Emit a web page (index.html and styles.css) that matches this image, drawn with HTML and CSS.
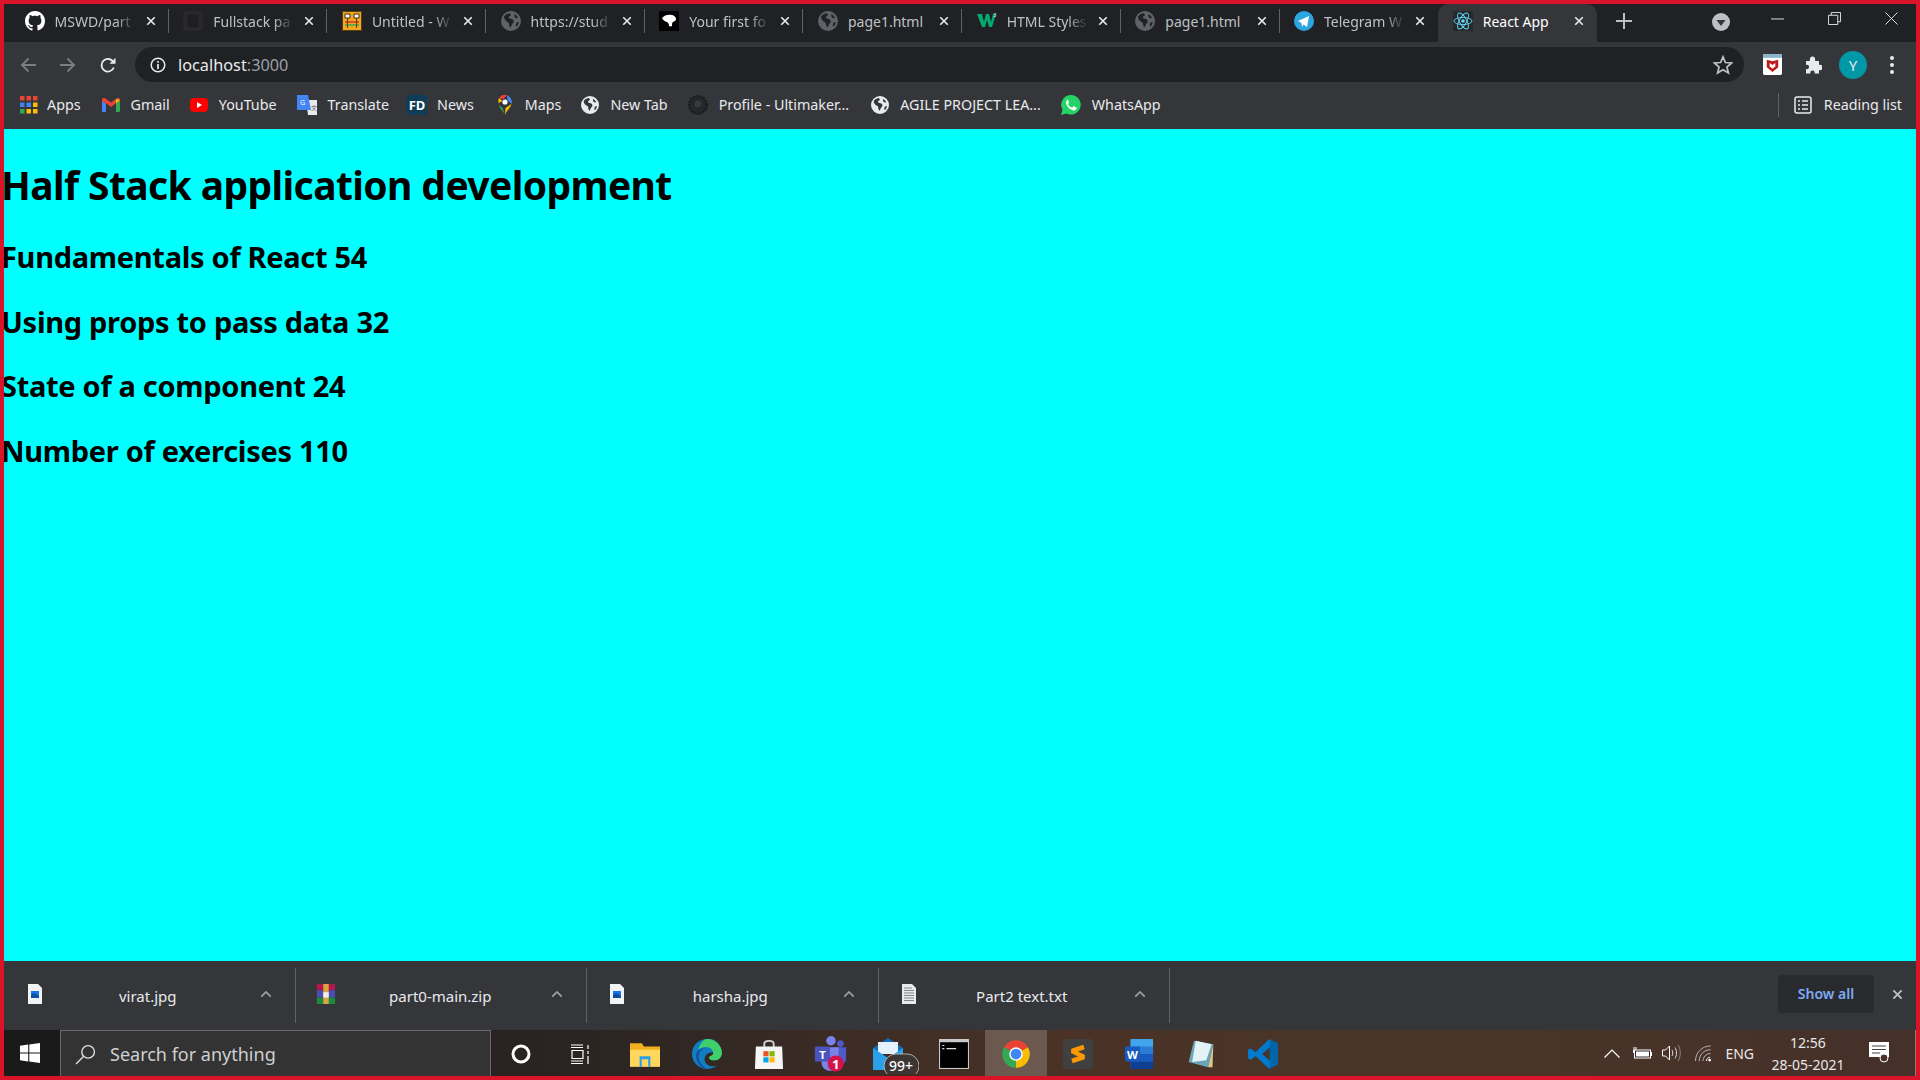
FILE: index.html
```html
<!DOCTYPE html>
<html lang="en">
<head>
    <meta charset="UTF-8">
    <meta name="viewport" content="width=device-width, initial-scale=1.0">
    <title>React App</title>
    <link rel="stylesheet" href="styles.css">
</head>
<body>

    <svg class="sprite">
        <symbol id="globe" viewBox="0 0 20 20">
            <path fill="currentColor" fill-rule="evenodd" d="M10 0a10 10 0 1 0 0 20a10 10 0 0 0 0-20zM3 5.500c1-1.500 3-3 5.500-3.300c1 .6 1.700 1.300 1.200 2.300c-.6.8-1.700.8-1.900 1.800c-.2 1 1.200 1.200 2 1.500c1.500.4 2.700.8 2.900 2.200c.2 1.500-1 2.300-1.700 3.300c-.5 1-.7 2-1.500 3.200c-1-1-1.400-2.500-1.500-3.800c-.1-1.300-1.300-1.500-2.300-2.300c-1-.8-2.500-1.800-2.700-4.900zM13 3c1.800.8 3.300 2.200 4 4c-1 .3-2.500.2-3.200-.7c-.6-.9-.3-2.200-.8-3.300zM17.600 11c0 2-1 3.600-2.300 4.800c-.6-1-.6-2.800.2-3.800c.5-.7 1.300-.9 2.100-1z"/>
        </symbol>
        <symbol id="close" viewBox="0 0 12 12">
            <path stroke="currentColor" stroke-width="2" fill="none" d="M1.500 1.500l9 9M10.500 1.500l-9 9"/>
        </symbol>
        <symbol id="chevron" viewBox="0 0 14 8">
            <path stroke="currentColor" stroke-width="2" fill="none" d="M1.500 7l5.500-5.500l5.500 5.500"/>
        </symbol>
        <symbol id="imagefile" viewBox="0 0 14 20">
            <path fill="#f1f3f4" d="M0 0h10l4 4v16h-14z"/>
            <path fill="#1a73e8" d="M3 7h8v7h-8z"/>
            <path fill="#0b4f9e" d="M3 11l3-2l5 3v2h-8z"/>
        </symbol>
    </svg>

    <div class="tabstrip">
        <div class="tab">
            <svg class="favicon" viewBox="0 0 16 16"><path fill="#fff" d="M8 0C3.580 0 0 3.580 0 8c0 3.540 2.290 6.530 5.470 7.590.4.070.55-.17.55-.38 0-.19-.01-.82-.01-1.490-2.010.37-2.530-.49-2.690-.94-.09-.23-.48-.94-.82-1.130-.28-.15-.68-.52-.01-.53.63-.01 1.080.58 1.230.82.72 1.210 1.870.87 2.330.66.070-.52.28-.87.51-1.070-1.780-.2-3.640-.89-3.640-3.950 0-.87.31-1.590.82-2.150-.08-.2-.36-1.020.08-2.120 0 0 .67-.21 2.200.82.64-.18 1.320-.27 2-.27.68 0 1.360.09 2 .27 1.530-1.040 2.200-.82 2.200-.82.44 1.100.16 1.920.08 2.120.51.56.82 1.270.82 2.150 0 3.070-1.870 3.750-3.650 3.950.29.25.54.73.54 1.480 0 1.070-.01 1.930-.01 2.200 0 .21.15.46.55.38A8.013 8.013 0 0 0 16 8c0-4.420-3.580-8-8-8z"/></svg>
            <span class="tab-title">MSWD/part</span>
            <svg class="tab-close"><use href="#close"/></svg>
        </div>
        <div class="tab">
            <svg class="favicon" viewBox="0 0 20 20"><rect x="1" y="1" width="18" height="18" rx="2" fill="#26272a" stroke="#2e2f32"/><rect x="4" y="3" width="12" height="14" fill="#1e1f21" stroke="#2c2d30"/></svg>
            <span class="tab-title">Fullstack pa</span>
            <svg class="tab-close"><use href="#close"/></svg>
        </div>
        <div class="tab">
            <svg class="favicon" viewBox="0 0 20 20"><rect x=".5" y=".5" width="19" height="19" fill="#f5a623" stroke="#5a3d10"/><path fill="#fff" stroke="#3a2a10" d="M3 3h5v4h-5zM12 3h5v4h-5z"/><path stroke="#d93025" stroke-width="1.500" d="M3 11h14"/><path stroke="#34a853" stroke-width="1.500" d="M3 14h14"/><path stroke="#5a3d10" d="M5.500 7v10M14.500 7v10"/></svg>
            <span class="tab-title">Untitled - W</span>
            <svg class="tab-close"><use href="#close"/></svg>
        </div>
        <div class="tab">
            <svg class="favicon globe-dim"><use href="#globe"/></svg>
            <span class="tab-title">https://stud</span>
            <svg class="tab-close"><use href="#close"/></svg>
        </div>
        <div class="tab">
            <svg class="favicon" viewBox="0 0 20 20"><rect width="20" height="20" fill="#000"/><path fill="#fff" d="M3 7c2-3 7-4 10-3c2 .5 4 2 4 4c0 2-2 2.500-3 3c-1 .5-1 2-1 4c-1 .5-2 .5-3 0c0-2-.5-3-2-4c-2-.5-4-1.500-5-4z"/></svg>
            <span class="tab-title">Your first fo</span>
            <svg class="tab-close"><use href="#close"/></svg>
        </div>
        <div class="tab">
            <svg class="favicon globe-dim"><use href="#globe"/></svg>
            <span class="tab-title nofade">page1.html</span>
            <svg class="tab-close"><use href="#close"/></svg>
        </div>
        <div class="tab">
            <svg class="favicon" viewBox="0 0 20 20"><path fill="#04aa6d" d="M0 3h5l2 8l2-8h3l2 8l2-8h3l-4 13h-3l-2-7l-2 7h-3z"/><text x="16" y="6" class="w3-sup">3</text></svg>
            <span class="tab-title">HTML Styles</span>
            <svg class="tab-close"><use href="#close"/></svg>
        </div>
        <div class="tab">
            <svg class="favicon globe-dim"><use href="#globe"/></svg>
            <span class="tab-title nofade">page1.html</span>
            <svg class="tab-close"><use href="#close"/></svg>
        </div>
        <div class="tab">
            <svg class="favicon" viewBox="0 0 20 20"><circle cx="10" cy="10" r="10" fill="#2ca5e0"/><path fill="#fff" d="M4 10l11-5l-2 11l-3.500-2.500l-1.500 2.500l-.5-4z"/></svg>
            <span class="tab-title">Telegram W</span>
            <svg class="tab-close"><use href="#close"/></svg>
        </div>
        <div class="tab tab-active">
            <svg class="favicon" viewBox="0 0 20 20"><rect width="20" height="20" fill="#26282c"/><g fill="none" stroke="#61dafb" stroke-width=".9"><ellipse cx="10" cy="10" rx="9" ry="3.600"/><ellipse cx="10" cy="10" rx="9" ry="3.600" transform="rotate(60 10 10)"/><ellipse cx="10" cy="10" rx="9" ry="3.600" transform="rotate(120 10 10)"/></g><circle cx="10" cy="10" r="1.800" fill="#61dafb"/></svg>
            <span class="tab-title nofade">React App</span>
            <svg class="tab-close"><use href="#close"/></svg>
        </div>
        <svg class="new-tab" viewBox="0 0 16 16"><path stroke="#bdc1c6" stroke-width="2" d="M8 0v16M0 8h16"/></svg>
        <div class="strip-end">
            <svg class="tab-search" viewBox="0 0 18 18"><circle cx="9" cy="9" r="9" fill="#bdc1c6"/><path fill="#35363a" d="M4.500 7h9l-4.500 6z"/></svg>
            <div class="window-controls">
                <svg viewBox="0 0 14 14"><path stroke="#e8eaed" d="M0 7.500h14"/></svg>
                <svg viewBox="0 0 14 14"><path fill="none" stroke="#e8eaed" d="M.5 3.500h10v10h-10zM3.500 3.500v-3h10v10h-3"/></svg>
                <svg viewBox="0 0 14 14"><path stroke="#e8eaed" d="M.5.500l13 13M13.500.500l-13 13"/></svg>
            </div>
        </div>
    </div>

    <div class="toolbar">
        <svg class="nav-icon dim" viewBox="0 0 16 16"><path fill="none" stroke="currentColor" stroke-width="1.800" d="M16 8h-14M8.500 1.500l-6.500 6.500l6.500 6.500"/></svg>
        <svg class="nav-icon dim" viewBox="0 0 16 16"><path fill="none" stroke="currentColor" stroke-width="1.800" d="M0 8h14M7.500 1.500l6.500 6.500l-6.500 6.500"/></svg>
        <svg class="nav-icon" viewBox="0 0 16 16"><path fill="none" stroke="currentColor" stroke-width="1.800" d="M13.800 10.500a6.300 6.300 0 1 1-.5-5.500"/><path fill="currentColor" d="M15.500 .8v6h-6z"/></svg>
        <div class="omnibox">
            <svg class="info-icon" viewBox="0 0 16 16"><circle cx="8" cy="8" r="6.800" fill="none" stroke="#e8eaed" stroke-width="1.500"/><path stroke="#e8eaed" stroke-width="1.700" d="M8 7v5M8 4v1.700"/></svg>
            <span class="url">localhost<span class="url-port">:3000</span></span>
            <svg class="star-icon" viewBox="0 0 20 20"><path fill="none" stroke="#bdc1c6" stroke-width="1.700" d="M10 1.800l2.400 5.700l6.200.5l-4.700 4l1.500 6l-5.400-3.200l-5.400 3.200l1.500-6l-4.700-4l6.200-.5z"/></svg>
        </div>
        <svg class="ext-mcafee" viewBox="0 0 20 22"><rect width="20" height="22" rx="1.500" fill="#fff"/><rect width="20" height="4" fill="#8ab4c8"/><path fill="#c01818" d="M4 6l6 1.500l6-1.500v8l-6 5l-6-5zM7 9.500v3.500l3 2.500l3-2.500v-3.500l-3 2z"/></svg>
        <svg class="ext-puzzle" viewBox="0 0 18 18"><path fill="#e8eaed" d="M2 5h4c-.5-2 0-4.500 2.500-4.500s3 2.500 2.500 4.500h4v4c2-.5 3.500 0 3.500 2.500s-1.500 3-3.500 2.500v3.500h-4.500c.5-2-.5-3-2-3s-2.500 1-2 3h-4.500v-4.500c2 .5 3-.5 3-2s-1-2.500-3-2z"/></svg>
        <div class="avatar">Y</div>
        <svg class="kebab" viewBox="0 0 4 18"><circle cx="2" cy="2" r="2"/><circle cx="2" cy="9" r="2"/><circle cx="2" cy="16" r="2"/></svg>
    </div>

    <div class="bookmarks">
        <div class="bookmark bookmark-apps">
            <svg class="mark-icon" viewBox="0 0 18 18"><g fill="#ea4335"><rect width="4.500" height="4.500"/><rect x="6.500" width="4.500" height="4.500"/><rect x="13" width="4.500" height="4.500"/></g><g fill="#4285f4"><rect y="6.500" width="4.500" height="4.500"/><rect x="6.500" y="6.500" width="4.500" height="4.500"/></g><rect x="13" y="6.500" width="4.500" height="4.500" fill="#fbbc04"/><g fill="#34a853"><rect y="13" width="4.500" height="4.500"/></g><g fill="#fbbc04"><rect x="6.500" y="13" width="4.500" height="4.500"/><rect x="13" y="13" width="4.500" height="4.500"/></g></svg>
            Apps
        </div>
        <div class="bookmark">
            <svg class="mark-icon" viewBox="0 0 18 14"><path fill="#ea4335" d="M0 2l4 3v9h-4zM0 2c0-2 2-2.500 3.500-1.500l5.500 4l5.500-4c1.500-1 3.500-.5 3.500 1.500l-9 7z"/><path fill="#4285f4" d="M0 3l4 3v8h-3c-.5 0-1-.5-1-1z"/><path fill="#34a853" d="M14 5.500l4-3.500v11c0 .5-.5 1-1 1h-3z"/><path fill="#fbbc04" d="M14 1l4 1l-4 3.500z"/></svg>
            Gmail
        </div>
        <div class="bookmark">
            <svg class="mark-icon" viewBox="0 0 18 14"><rect width="18" height="14" rx="4" fill="#f00"/><path fill="#fff" d="M7 4l5 3l-5 3z"/></svg>
            YouTube
        </div>
        <div class="bookmark">
            <svg class="mark-icon wide" viewBox="0 0 20 20"><path fill="#e8eaed" d="M9 5h11v15h-9z"/><path fill="#4285f4" d="M0 0h11l3 15h-14z"/><text x="3" y="10" class="translate-g">G</text><text x="14" y="15" class="translate-a">文</text></svg>
            Translate
        </div>
        <div class="bookmark bookmark-news">
            <span class="fd-icon">FD</span>
            News
        </div>
        <div class="bookmark bookmark-maps">
            <svg class="mark-icon narrow" viewBox="0 0 14 20"><path fill="#34a853" d="M7 20c-1-3-5-6-6.500-10l4 3z"/><path fill="#fbbc04" d="M7 20c1-4 5-6 6.500-11l-6 4z"/><path fill="#ea4335" d="M1 3a7 7 0 0 1 8-2.700l-4 4z"/><path fill="#4285f4" d="M9 .3a7 7 0 0 1 4.500 8.700l-4-4z"/><circle cx="7" cy="7" r="2.600" fill="#fff"/><path fill="#fbbc04" d="M.6 8a7 7 0 0 1 .4-5l3.500 3z"/></svg>
            Maps
        </div>
        <div class="bookmark">
            <svg class="mark-icon"><use href="#globe"/></svg>
            New Tab
        </div>
        <div class="bookmark bookmark-profile">
            <svg class="mark-icon wide" viewBox="0 0 18 18"><circle cx="9" cy="9" r="8" fill="#26272a" stroke="#1b1c1e" stroke-width="2" stroke-dasharray="2 1"/><circle cx="9" cy="8" r="3" fill="#3a3b3e"/></svg>
            Profile - Ultimaker...
        </div>
        <div class="bookmark">
            <svg class="mark-icon"><use href="#globe"/></svg>
            AGILE PROJECT LEA...
        </div>
        <div class="bookmark">
            <svg class="mark-icon wide" viewBox="0 0 20 20"><path fill="#25d366" d="M10 0a9.800 9.800 0 0 0-8.400 14.800l-1.600 5.200l5.400-1.500a9.800 9.800 0 1 0 4.600-18.500z"/><path fill="#fff" d="M6.500 4.800c-1.500 1-2 3-.8 5.300c1.300 2.400 3.300 4.300 5.900 5.100c2 .6 3.700-.3 4-1.800c.1-.6-.1-.9-.5-1.100l-2-1c-.4-.2-.7-.1-1 .3l-.7.8c-.2.200-.5.300-.8.100c-1.500-.6-2.800-1.800-3.500-3.200c-.1-.3 0-.5.200-.7l.5-.7c.2-.3.200-.5.100-.8l-.8-1.900c-.3-.6-.9-.8-1.600-.4z"/></svg>
            WhatsApp
        </div>
        <div class="reading-list">
            <svg class="mark-icon" viewBox="0 0 18 18"><rect x="1" y="1" width="16" height="16" rx="2" fill="none" stroke="#e8eaed" stroke-width="1.500"/><path stroke="#e8eaed" stroke-width="1.500" d="M4 5h2M8 5h6M4 9h2M8 9h6M4 13h2M8 13h6"/></svg>
            Reading list
        </div>
    </div>

    <main class="page">
        <h1>Half Stack application development</h1>
        <h3>Fundamentals of React 54</h3>
        <h3>Using props to pass data 32</h3>
        <h3>State of a component 24</h3>
        <h3>Number of exercises 110</h3>
    </main>

    <div class="downloads">
        <div class="download first">
            <svg class="file-icon"><use href="#imagefile"/></svg>
            <span class="file-name">virat.jpg</span>
            <svg class="file-more"><use href="#chevron"/></svg>
        </div>
        <div class="download">
            <svg class="file-icon rar" viewBox="0 0 20 22"><rect width="20" height="7" fill="#b0174f"/><rect y="7" width="20" height="8" fill="#4a4fb5"/><rect y="15" width="20" height="7" fill="#1b8a3a"/><rect x="7" width="6" height="22" fill="#d9a441"/><rect x="7" y="9" width="6" height="6" fill="#eee"/></svg>
            <span class="file-name">part0-main.zip</span>
            <svg class="file-more"><use href="#chevron"/></svg>
        </div>
        <div class="download">
            <svg class="file-icon"><use href="#imagefile"/></svg>
            <span class="file-name">harsha.jpg</span>
            <svg class="file-more"><use href="#chevron"/></svg>
        </div>
        <div class="download">
            <svg class="file-icon" viewBox="0 0 14 20"><path fill="#e8eaed" d="M0 0h10l4 4v16h-14z"/><path stroke="#80868b" d="M2 4h8M2 6.500h10M2 9h10M2 11.500h10M2 14h10M2 16.500h10"/></svg>
            <span class="file-name">Part2 text.txt</span>
            <svg class="file-more"><use href="#chevron"/></svg>
        </div>
        <div class="downloads-end">
            <div class="show-all">Show all</div>
            <svg class="shelf-close"><use href="#close"/></svg>
        </div>
    </div>

    <div class="taskbar">
        <div class="start">
            <svg viewBox="0 0 20 20" class="win-logo"><path fill="#fff" d="M0 2.800l8.200-1.200v7.900h-8.200zM9.300 1.500l10.700-1.500v9.500h-10.700zM0 10.500h8.200v7.900l-8.200-1.200zM9.300 10.500h10.700v9.500l-10.700-1.500z"/></svg>
        </div>
        <div class="search">
            <svg class="search-icon" viewBox="0 0 20 20"><circle cx="12.500" cy="7.500" r="6" fill="none" stroke="#e0e0e0" stroke-width="1.300"/><path stroke="#e0e0e0" stroke-width="1.300" d="M8 12l-7 7"/></svg>
            Search for anything
        </div>
        <div class="task-slot">
            <svg class="task-icon small" viewBox="0 0 20 20"><circle cx="10" cy="10" r="8" fill="none" stroke="#fff" stroke-width="3"/></svg>
        </div>
        <div class="task-slot">
            <svg class="task-icon small task-view" viewBox="0 0 20 20"><path fill="none" stroke="#fff" stroke-width="1.200" d="M1 1h12M1 3.500h12M2 6.500h11v8h-11zM1 17h12M1 19.500h12M18 1v4M18 7v3M18 12v8"/></svg>
        </div>
        <div class="task-slot">
            <svg class="task-icon" viewBox="0 0 28 24"><path fill="#f2b01e" d="M0 2h11l2 3h15v4h-28z"/><path fill="#ffd75e" d="M0 8h28v16h-28z"/><path fill="#2f9ee8" d="M9 14h10v10h-2v-7h-6v7h-2z"/></svg>
        </div>
        <div class="task-slot">
            <svg class="task-icon" viewBox="0 0 30 30"><path fill="#0f7ec2" d="M15 0c-8.500 0-15 6.500-15 15c0 8 6.500 15 15 15c4 0 7.500-1.200 10-3.500c-3 1.500-10 1.500-12-4c-1.500-4 1-8.500 6-9c3-.2 5-2 4-4.500c-1.500-3-8-5-12-1c2-4.500 8-6.500 13-4.500c2 .8 3 2 4 4c-2-5-7-8-13-8z"/><path fill="#3fd06b" d="M15 0c8 0 15 6 15 14c0 4-3 7.500-8 7.500c-3 0-5-1-5-3c0-1.500 3-1.500 4-3.500c1-3-2-7-7-7c-4 0-7 2-8 3c2-6 5-11 9-11z"/><path fill="#1b4fa0" d="M4 16c0-4 4-7 9-7c-5 2-7 6-6 11c.5 3 3 7 8 10c-6 0-11-7-11-14z"/></svg>
        </div>
        <div class="task-slot">
            <svg class="task-icon" viewBox="0 0 30 32"><path fill="none" stroke="#d5d5d5" stroke-width="2" d="M10 9v-4c0-4 10-4 10 0v4"/><path fill="#f5f5f5" d="M1 8h28l1 24h-30z"/><rect x="9" y="13" width="5.500" height="5.500" fill="#f25022"/><rect x="15.500" y="13" width="5.500" height="5.500" fill="#7fba00"/><rect x="9" y="19.500" width="5.500" height="5.500" fill="#00a4ef"/><rect x="15.500" y="19.500" width="5.500" height="5.500" fill="#ffb900"/></svg>
        </div>
        <div class="task-slot">
            <svg class="task-icon teams" viewBox="0 0 33 38"><circle cx="17" cy="5" r="5" fill="#7b83eb"/><circle cx="27" cy="8" r="3.500" fill="#5059c9"/><path fill="#5059c9" d="M20 12h13v12a5 5 0 0 1-13 0z"/><path fill="#7b83eb" d="M7 12h18v16a9 9 0 0 1-18 0z"/><rect y="11" width="16" height="16" rx="1.500" fill="#4b53bc"/><text x="8" y="24" class="teams-t">T</text><circle cx="22" cy="29" r="8.500" fill="#d3124a"/><text x="22" y="35" class="teams-n">1</text></svg>
        </div>
        <div class="task-slot">
            <svg class="task-icon mail" viewBox="0 0 46 36"><path fill="#0f6cbd" d="M15 0l15 10v4h-30v-4z"/><path fill="#e6f2fb" d="M5 4h20v12h-20z"/><path fill="#2aa0e8" d="M0 10l15 10l15-10v22h-30z"/><rect x="11" y="16" width="35" height="24" rx="12" fill="#3b3634" stroke="#c8c8c8" stroke-width=".8"/><text x="28" y="33" class="mail-count">99+</text></svg>
        </div>
        <div class="task-slot">
            <svg class="task-icon" viewBox="0 0 28 28"><rect width="28" height="28" fill="#c8c8c8"/><rect x="1" y="3" width="26" height="24" fill="#000"/><path stroke="#ddd" d="M3 6h2M3 9h2M7 9h9"/></svg>
        </div>
        <div class="task-slot active">
            <svg class="task-icon" viewBox="0 0 24 24"><path fill="#ea4335" d="M12 12L2.470 6.500A11 11 0 0 1 21.530 6.500z"/><path fill="#fbbc04" d="M12 12L21.530 6.500A11 11 0 0 1 12 23z"/><path fill="#34a853" d="M12 12L12 23A11 11 0 0 1 2.470 6.500z"/><circle cx="12" cy="12" r="5.400" fill="#fff"/><circle cx="12" cy="12" r="4.300" fill="#4285f4"/></svg>
        </div>
        <div class="task-slot">
            <svg class="task-icon" viewBox="0 0 30 30"><rect width="30" height="30" rx="3" fill="#404040"/><path fill="none" stroke="#ff9800" stroke-width="4.500" stroke-linejoin="bevel" d="M21 8l-12 4l12 6l-12 4"/></svg>
        </div>
        <div class="task-slot">
            <svg class="task-icon" viewBox="0 0 30 32"><rect x="6" width="24" height="32" rx="2" fill="#2b7cd3"/><rect x="6" width="24" height="8" fill="#41a5ee"/><rect x="6" y="16" width="24" height="8" fill="#185abd"/><rect x="6" y="24" width="24" height="8" fill="#103f91"/><rect y="8" width="16" height="16" rx="1.500" fill="#185abd"/><text x="8" y="21" class="word-w">W</text></svg>
        </div>
        <div class="task-slot">
            <svg class="task-icon" viewBox="0 0 28 34"><path fill="#6aa5b8" d="M6 2l22 4l-6 26l-22-6z"/><path fill="#e3f2f5" d="M8 2l18 4l-6 18l-16 2z"/><path fill="#d9c98f" d="M22 32l6-26l-1 26z"/></svg>
        </div>
        <div class="task-slot">
            <svg class="task-icon" viewBox="0 0 32 32"><path fill="#0065a9" d="M23 0l9 4.500v23l-9 4.500l-15-14l-5 4l-3-1.500v-9l3-1.500l5 4zM23 9l-8 7l8 7z"/><path fill="#007acc" d="M23 0l-15 14l-5-4l-3 1.500v9l3 1.500l5-4l15 14v-9l-8-7l8-7z"/></svg>
        </div>
        <div class="tray">
            <svg class="tray-chevron" viewBox="0 0 16 9"><path fill="none" stroke="#fff" stroke-width="1.200" d="M.5 8.500l7.500-7.500l7.500 7.500"/></svg>
            <svg class="tray-battery" viewBox="0 0 20 12"><path stroke="#fff" d="M2 0v3M4 0v3"/><rect x="1" y="3" width="4" height="3" fill="#fff"/><rect x="2.500" y="3" width="16" height="8" fill="#2a2422" stroke="#fff"/><rect x="4" y="4.500" width="13" height="5" fill="#fff"/><rect x="19" y="5" width="1" height="4" fill="#fff"/></svg>
            <svg class="tray-sound" viewBox="0 0 20 18"><path fill="none" stroke="#fff" d="M.5 6h3l4-4v14l-4-4h-3z"/><path fill="none" stroke="#ddd" d="M10 6c1 1.500 1 4.500 0 6M13 3.500c2 3 2 8 0 11"/><path fill="none" stroke="#888" d="M16 1c3 4 3 12 0 16"/></svg>
            <svg class="tray-wifi" viewBox="0 0 18 18"><g fill="none" stroke="#bbb"><path d="M.5 17c0-9 7-16 16-16"/><path d="M4.500 17c0-7 5-12 12-12"/><path d="M8.500 17c0-4 3-8 8-8"/></g><path fill="none" stroke="#fff" d="M12 17c0-2 1.500-4 4-4"/><circle cx="15.500" cy="16" r="1.500" fill="#fff"/></svg>
            <span class="tray-lang">ENG</span>
            <div class="clock"><span>12:56</span><span>28-05-2021</span></div>
            <svg class="tray-note" viewBox="0 0 20 22"><path fill="#fff" d="M0 0h20v15h-3v5l-5-5h-12z"/><path stroke="#444" d="M3 4h14M3 7.500h14M3 11h8"/><circle cx="15" cy="16" r="4" fill="#4a3226" stroke="#fff"/></svg>
        </div>
    </div>

</body>
</html>
```

FILE: styles.css
```css
* {
    box-sizing: border-box;
}

html, body {
    height: 100%;
}

body {
    margin: 0;
    height: 1080px;
    display: flex;
    flex-direction: column;
    overflow: hidden;
    border: 4px solid #d91428;
    font-family: 'Noto Sans', 'Open Sans', sans-serif;
    background-color: #35363a;
}

.sprite {
    display: none;
}

/* tab strip */
.tabstrip {
    height: 38px;
    flex: none;
    display: flex;
    align-items: center;
    padding-left: 6px;
    background-color: #202124;
}

.tab {
    width: 158.7px;
    height: 38px;
    flex: none;
    display: flex;
    align-items: center;
    padding: 0 13px 4px 14.5px;
    font-size: 14px;
    color: #bdc1c6;
    position: relative;
}

.tab::after {
    content: "";
    position: absolute;
    right: 0;
    top: 5px;
    height: 24px;
    width: 1px;
    background-color: #5f6368;
}

.tab:nth-child(9)::after,
.tab-active::after {
    display: none;
}

.tab-active {
    background-color: #35363a;
    border-radius: 10px 10px 0 0;
    color: #fff;
}

.favicon {
    width: 20px;
    height: 20px;
    flex: none;
    color: #5f6368;
}

.tab-title {
    flex: 1;
    min-width: 0;
    margin: 0 10px 0 10px;
    white-space: nowrap;
    overflow: hidden;
    -webkit-mask-image: linear-gradient(to right, #000 75%, transparent 100%);
    mask-image: linear-gradient(to right, #000 75%, transparent 100%);
}

.tab-title.nofade {
    -webkit-mask-image: none;
    mask-image: none;
}

.tab-close {
    width: 10px;
    height: 10px;
    flex: none;
    color: #e8eaed;
}

.w3-sup {
    font-size: 6px;
    fill: #e8eaed;
    font-family: 'Noto Sans', sans-serif;
}

.new-tab {
    width: 16px;
    height: 16px;
    margin: -4px 0 0 19px;
    flex: none;
}

.strip-end {
    flex: 1;
    display: flex;
    align-items: center;
    justify-content: flex-end;
}

.tab-search {
    width: 18px;
    height: 18px;
    margin: -2px 41px 0 0;
}

.window-controls {
    display: flex;
    gap: 44px;
    margin-right: 18px;
    margin-top: -9px;
}

.window-controls svg {
    width: 13px;
    height: 13px;
}

/* address row */
.toolbar {
    height: 40px;
    flex: none;
    display: flex;
    align-items: center;
    padding: 5px 0 0 16px;
    background-color: #35363a;
    color: #e8eaed;
}

.nav-icon {
    width: 16px;
    height: 16px;
    margin-right: 24px;
    flex: none;
}

.nav-icon.dim {
    color: #7b7e83;
}

.omnibox {
    width: 1609px;
    height: 35px;
    flex: none;
    margin-left: -5px;
    display: flex;
    align-items: center;
    padding: 0 11px 0 15px;
    border-radius: 18px;
    background-color: #202124;
    font-size: 16.3px;
}

.info-icon {
    width: 16px;
    height: 16px;
    margin-right: 12px;
}

.url {
    flex: 1;
    color: #e8eaed;
}

.url-port {
    color: #9aa0a6;
}

.star-icon {
    width: 20px;
    height: 20px;
}

.ext-mcafee {
    width: 19px;
    height: 21px;
    margin-left: 19px;
    flex: none;
}

.ext-puzzle {
    width: 18px;
    height: 18px;
    margin-left: 22px;
    flex: none;
}

.avatar {
    width: 28px;
    height: 28px;
    margin-left: 17px;
    flex: none;
    border-radius: 50%;
    background-color: #0097a7;
    color: #e8eaed;
    font-size: 15px;
    text-align: center;
    line-height: 28px;
}

.kebab {
    width: 4px;
    height: 18px;
    margin-left: 23px;
    fill: #e8eaed;
    flex: none;
}

/* bookmarks */
.bookmarks {
    height: 47px;
    flex: none;
    display: flex;
    align-items: center;
    gap: 20px;
    padding: 0 0 2px 16px;
    background-color: #35363a;
    color: #e8eaed;
    font-size: 14.3px;
}

.bookmark {
    display: flex;
    align-items: center;
    gap: 11px;
    white-space: nowrap;
}

.bookmark-apps {
    gap: 9px;
    margin-right: 1px;
}

.bookmark-news {
    gap: 10px;
    margin-left: -2px;
}

.bookmark-maps {
    gap: 13px;
    margin-left: 4px;
}

.bookmark-profile {
    margin-right: 2px;
}

.mark-icon {
    width: 18px;
    height: 18px;
    flex: none;
}

.mark-icon.wide {
    width: 20px;
    height: 20px;
}

.mark-icon.narrow {
    width: 14px;
    height: 20px;
}

.translate-g {
    font-size: 7px;
    fill: #fff;
    font-family: 'Noto Sans', sans-serif;
}

.translate-a {
    font-size: 6px;
    fill: #555;
    font-family: 'Noto Sans CJK SC', sans-serif;
}

.fd-icon {
    width: 20px;
    height: 20px;
    background-color: #0f3d57;
    color: #fff;
    font-size: 13px;
    font-weight: 700;
    line-height: 20px;
    text-align: center;
}

.reading-list {
    margin-left: auto;
    margin-right: 14px;
    height: 24px;
    display: flex;
    align-items: center;
    gap: 12px;
    padding-left: 15px;
    border-left: 1px solid #5f6368;
}

/* page content */
.page {
    flex: 1;
    min-height: 0;
    background-color: #00ffff;
    color: #000;
}

h1 {
    margin: 29px 0 26px -3px;
    font-size: 39px;
    line-height: 53px;
    letter-spacing: -0.6px;
}

h3 {
    margin: 0 0 24.5px -3px;
    font-size: 29px;
    line-height: 40px;
    letter-spacing: -0.3px;
}

/* download shelf */
.downloads {
    height: 69px;
    flex: none;
    display: flex;
    align-items: center;
    background-color: #35363a;
    color: #e8eaed;
    font-size: 15px;
}

.download {
    width: 291.5px;
    height: 55px;
    flex: none;
    display: flex;
    align-items: center;
    padding: 0 23px 0 23px;
    border-right: 1px solid #5f6368;
}

.download.first {
    padding-left: 24px;
}

.file-icon {
    width: 14px;
    height: 20px;
    flex: none;
    margin-top: -4px;
}

.file-icon.rar {
    width: 20px;
    margin-left: -3px;
}

.file-name {
    flex: 1;
    padding-right: 6px;
    text-align: center;
    white-space: nowrap;
}

.file-more {
    width: 12px;
    height: 8px;
    flex: none;
    margin-top: -4px;
    color: #9aa0a6;
}

.downloads-end {
    flex: 1;
    display: flex;
    align-items: center;
    justify-content: flex-end;
    margin-top: -3px;
}

.show-all {
    width: 96px;
    height: 38px;
    border-radius: 4px;
    background-color: #292a2d;
    color: #7daaf5;
    font-size: 14px;
    font-weight: 600;
    line-height: 38px;
    text-align: center;
}

.shelf-close {
    width: 11px;
    height: 11px;
    margin: 0 13px 0 18px;
    color: #bdc1c6;
}

/* windows taskbar */
.taskbar {
    height: 46px;
    flex: none;
    display: flex;
    align-items: stretch;
    background: linear-gradient(to right, #1c1b1b 0%, #2a2422 30%, #4a3226 55%, #4a3428 80%, #45302a 100%);
    color: #e8e8e8;
}

.start {
    width: 56px;
    flex: none;
    display: flex;
    align-items: center;
    justify-content: center;
    background-color: #1a1a1a;
}

.win-logo {
    width: 20px;
    height: 20px;
    margin-left: -4px;
}

.search {
    width: 430.5px;
    flex: none;
    display: flex;
    align-items: center;
    gap: 14px;
    padding: 1px 0 0 14px;
    background-color: #333333;
    border: 1px solid #6a6a6a;
    border-bottom: none;
    color: #cfcfcf;
    font-size: 18px;
}

.search-icon {
    width: 21px;
    height: 21px;
}

.task-slot {
    width: 61.8px;
    flex: none;
    display: flex;
    align-items: center;
    justify-content: center;
    padding-top: 2px;
}

.task-slot.active {
    background-color: #6b5950;
}

.task-icon {
    width: 30px;
    height: 30px;
}

.task-icon.small {
    width: 20px;
    height: 20px;
}

.task-icon.task-view {
    margin-right: 6px;
}

.task-icon.teams {
    width: 33px;
    height: 36px;
}

.task-icon.mail {
    width: 46px;
    height: 36px;
    margin-left: 8px;
    margin-top: 4px;
}

.teams-t {
    font: 700 12px 'Noto Sans', sans-serif;
    fill: #fff;
    text-anchor: middle;
}

.teams-n {
    font: 700 14px 'Noto Sans', sans-serif;
    fill: #fff;
    text-anchor: middle;
}

.mail-count {
    font: 500 14px 'Noto Sans', sans-serif;
    fill: #fff;
    text-anchor: middle;
}

.word-w {
    font: 700 12px 'Noto Sans', sans-serif;
    fill: #fff;
    text-anchor: middle;
}

.tray {
    flex: 1;
    display: flex;
    align-items: center;
    justify-content: flex-end;
    padding-right: 26px;
    border-right: 1px solid #8a7a70;
}

.tray-chevron {
    width: 16px;
    height: 9px;
}

.tray-battery {
    width: 20px;
    height: 14px;
    margin-left: 12px;
}

.tray-sound {
    width: 20px;
    height: 18px;
    margin-left: 10px;
}

.tray-wifi {
    width: 17px;
    height: 17px;
    margin-left: 13px;
}

.tray-lang {
    margin-left: 13px;
    font-size: 14px;
}

.clock {
    width: 90px;
    margin-left: 9px;
    display: flex;
    flex-direction: column;
    align-items: center;
    gap: 3px;
    font-size: 14px;
    line-height: 19px;
}

.tray-note {
    width: 20px;
    height: 22px;
    margin-left: 16px;
}
```
